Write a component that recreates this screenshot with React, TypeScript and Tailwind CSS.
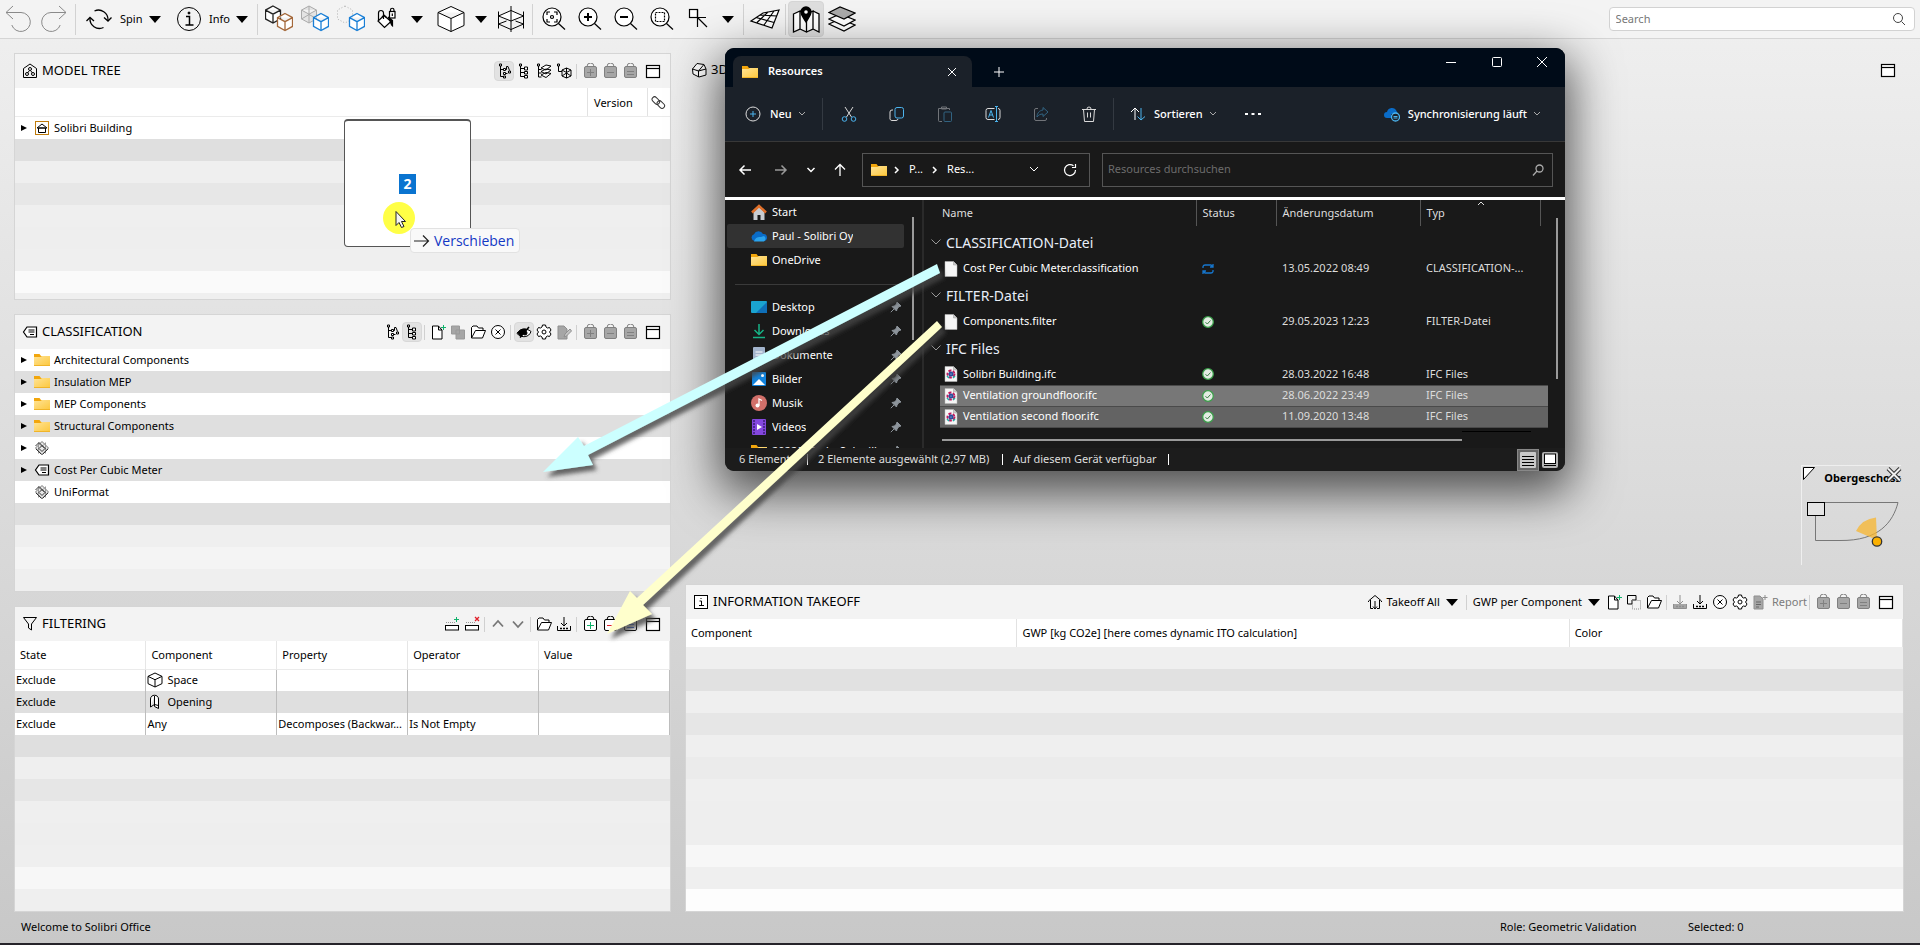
import React from 'react';

/* ---------- shared bits ---------- */

const Svg = ({ w = 16, h = 16, sw = 1, className = '', children }: any) => (
  <svg
    width={w}
    height={h}
    viewBox={`0 0 ${w} ${h}`}
    fill="none"
    stroke="currentColor"
    strokeWidth={sw}
    className={`shrink-0 ${className}`}
    aria-hidden="true"
  >
    {children}
  </svg>
);

const Caret = () => (
  <svg width="12" height="7" viewBox="0 0 12 7" className="shrink-0" aria-hidden="true">
    <path d="M0 0h12L6 7z" fill="#000" />
  </svg>
);

const Folder = ({ className = '' }: any) => (
  <svg width="16" height="14" viewBox="0 0 16 14" className={`shrink-0 ${className}`} aria-hidden="true">
    <defs>
      <linearGradient id="folderFill" x1="0" y1="0" x2="1" y2="1">
        <stop offset="0" stopColor="#ffe395" />
        <stop offset="1" stopColor="#fcc83f" />
      </linearGradient>
    </defs>
    <path d="M0 1h5.5l1.5 2H16v6H0z" fill="#f2a60c" />
    <path d="M0 4h6.5L8 3h8v9.5H0z" fill="url(#folderFill)" />
    <path d="M0 12h16v1H0z" fill="#f0b429" />
  </svg>
);

/* ---------- main toolbar icons, 28px grid ---------- */

const cubePath = (x: number, y: number, w: number, h: number) =>
  `M${x + w / 2} ${y}L${x + w} ${y + h * 0.24}V${y + h * 0.76}L${x + w / 2} ${y + h}L${x} ${y + h * 0.76}V${y + h * 0.24}ZM${x} ${y + h * 0.24}L${x + w / 2} ${y + h * 0.48}L${x + w} ${y + h * 0.24}M${x + w / 2} ${y + h * 0.48}V${y + h}`;

const UndoIcon = () => (
  <Svg w={28} h={28} className="text-[#8a8a8a]">
    <path d="M9 1 2 7.5 9 14M2 7.5H17a9.500 9.500 0 1 1-9.200 12.500" />
  </Svg>
);
const RedoIcon = () => (
  <Svg w={28} h={28} className="text-[#8a8a8a]">
    <path d="M19 1l7 6.500L19 14M26 7.500H11a9.500 9.500 0 1 0 9.200 12.500" />
  </Svg>
);
const SpinIcon = () => (
  <Svg w={28} h={28} sw={1.3}>
    <path d="M9.500 6a9.500 9.500 0 0 1 13.500 9M18.500 22.500A9.500 9.500 0 0 1 5 13" />
    <path d="M19 12.500l4 3.500 3.500-3.500M1.500 16 5 12.500 9 16" />
  </Svg>
);
const InfoIcon = () => (
  <Svg w={28} h={28}>
    <circle cx="14" cy="14" r="11.5" />
    <path d="M11 11.500h3.500V20M10.500 20h8" strokeWidth="1.5" />
    <circle cx="14" cy="8" r="1" fill="currentColor" />
  </Svg>
);
const CubesOrange = () => (
  <Svg w={28} h={28}>
    <path d={cubePath(0.5, 1, 15, 17)} fill="#fff" stroke="#222" strokeWidth="1.3" />
    <path d={cubePath(12.5, 8.5, 15, 17)} fill="#fff" stroke="#a4683a" strokeWidth="1.3" />
  </Svg>
);
const CubesGray = () => (
  <Svg w={28} h={28}>
    <path d={cubePath(0.5, 1, 15, 17)} fill="#e4e4e4" stroke="#aaa" />
    <path d="M8 1v9M.5 14 8 9.500l7.500 4" stroke="#aaa" />
    <path d={cubePath(12.5, 8.5, 15, 17)} fill="#fff" stroke="#1a7fd6" strokeWidth="1.3" />
  </Svg>
);
const CubesDotted = () => (
  <Svg w={28} h={28}>
    <path d="M8 1l7.500 4v9L8 18 .5 14V5z" stroke="#b0b0b0" strokeDasharray="1 2" />
    <path d={cubePath(12.5, 8.5, 15, 17)} fill="#fff" stroke="#1a7fd6" strokeWidth="1.3" />
  </Svg>
);
const PaintIcon = () => (
  <Svg w={28} h={28} sw={1.2}>
    <path d="M11 10.500 18 16.500l-6.500 6L5 16z" fill="#fff" />
    <path d="M5.500 15V8a2.500 2.500 0 0 1 5 0v6M9 12l2-2 2.500 2.500" />
    <path d="M15 12l4.500 3.500V21c-2-1-1.500-5-4.500-9z" fill="currentColor" />
    <rect x="16.500" y="6.500" width="5.500" height="6.500" fill="#fff" />
    <path d="M17.500 6.500V5a1.700 1.700 0 0 1 3.500 0v1.500M19.300 8.500v2.500" />
  </Svg>
);
const CubeIcon = () => (
  <Svg w={28} h={28}>
    <path d={cubePath(1, 1.5, 26, 25)} fill="#fff" />
  </Svg>
);
const SectionIcon = () => (
  <Svg w={28} h={28}>
    <path d="M1.500 11 14 5.500 26.500 11 14 16z" fill="#fff" />
    <path d="M1.500 19 14 24.500 26.500 19M1.500 19l8-3M26.500 19l-8-3M1.500 6.500v17M26.500 6.500v17M14 1v26" />
  </Svg>
);
const ZoomBase = ({ children }: any) => (
  <Svg w={28} h={28} sw={1.2}>
    <circle cx="12" cy="12" r="9" fill="#fff" />
    <path d="M18.500 18.500 25 24.500" />
    {children}
  </Svg>
);
const RulerIcon = () => (
  <Svg w={28} h={28} sw={1.2}>
    <rect x="5.500" y="4.500" width="8" height="8" fill="#fff" />
    <path d="M13.500 4.500v17.500M13.500 12.500H22M13.500 12.500 23 22" />
  </Svg>
);
const GridIcon = () => (
  <Svg w={32} h={24} sw={1.2}>
    <path d="M2 14 14 6l16-3-7 18zM8 15.500 19 5M15 18 25 4M7 10.500l18 5M11 8l17 1" fill="#fff" />
  </Svg>
);
const MapIcon = () => (
  <Svg w={28} h={28} sw={1.3}>
    <path d="M1.500 9 8 6v18l-6.500 3zM8 6l6.500 3v18L8 24M14.500 9 21 6v18l-6.500 3M21 6l6 3v18l-6-3" fill="#fff" />
    <path d="M14 17c-3-5-5-7-5-10a5 5 0 0 1 10 0c0 3-2 5-5 10z" fill="#000" />
    <circle cx="14" cy="7" r="1.8" fill="#fff" stroke="none" />
  </Svg>
);
const LayersIcon = () => (
  <Svg w={28} h={28} sw={1.2}>
    <path d="M1 19l11-5 15 6-11 6z" fill="#fff" />
    <path d="M1 14l11-5 15 6-11 6z" fill="#fff" />
    <path d="M1 7.500 12 2l15 6-11 6z" fill="#aaa" />
  </Svg>
);

const Cell = ({ label, active = false, children }: any) => (
  <button
    aria-label={label}
    className={
      active
        ? 'flex h-9 w-9 shrink-0 items-center justify-center rounded border border-[#d6d6d6] bg-[#dedede]'
        : 'flex h-9 w-9 shrink-0 items-center justify-center'
    }
  >
    {children}
  </button>
);

const DropBtn = ({ label }: any) => (
  <button aria-label={label} className="flex h-9 w-6 shrink-0 items-center justify-center">
    <Caret />
  </button>
);

const BarSep = () => <div className="mx-[3px] h-[31px] w-px shrink-0 bg-[#d2d2d2]" />;

const Toolbar = () => (
  <header className="flex h-[39px] items-center border-b border-[#d5d5d5] bg-[#f3f3f3] pr-[5px]">
    <Cell label="Undo"><UndoIcon /></Cell>
    <Cell label="Redo"><RedoIcon /></Cell>
    <BarSep />
    <button className="flex h-9 w-[88px] shrink-0 items-center pl-[6px]">
      <SpinIcon />
      <span className="w-9 pl-[7px] text-left">Spin</span>
      <Caret />
    </button>
    <button className="flex h-9 w-[87px] shrink-0 items-center pl-2">
      <InfoIcon />
      <span className="w-[33px] pl-[6px] text-left">Info</span>
      <Caret />
    </button>
    <BarSep />
    <Cell label="Show all"><CubesOrange /></Cell>
    <Cell label="Transparent others"><CubesGray /></Cell>
    <Cell label="Hide others"><CubesDotted /></Cell>
    <Cell label="Paint"><PaintIcon /></Cell>
    <DropBtn label="Paint options" />
    <div className="w-1" />
    <Cell label="View cube"><CubeIcon /></Cell>
    <DropBtn label="View options" />
    <Cell label="Section"><SectionIcon /></Cell>
    <BarSep />
    <Cell label="Zoom to fit">
      <ZoomBase><path d="M7 10V7h3M14 7h3v3M17 14v3h-3M10 17H7v-3" /><circle cx="12" cy="12" r="1.5" /></ZoomBase>
    </Cell>
    <Cell label="Zoom in"><ZoomBase><path d="M12 8v8M8 12h8" strokeWidth="2" /></ZoomBase></Cell>
    <Cell label="Zoom out"><ZoomBase><path d="M8 12h8" strokeWidth="2" /></ZoomBase></Cell>
    <Cell label="Zoom area">
      <ZoomBase><rect x="7.500" y="7.500" width="9" height="9" strokeDasharray="2 1" /></ZoomBase>
    </Cell>
    <Cell label="Measure"><RulerIcon /></Cell>
    <DropBtn label="Measure options" />
    <BarSep />
    <Cell label="Grid"><GridIcon /></Cell>
    <div className="mx-[2px] h-[31px] w-px shrink-0 bg-[#d2d2d2]" />
    <Cell label="Map" active><MapIcon /></Cell>
    <Cell label="Layers"><LayersIcon /></Cell>
    <label className="ml-auto flex h-6 w-[16%] items-center rounded border border-[#d2d2d2] bg-white pl-[6px] pr-2">
      <input
        aria-label="Search"
        placeholder="Search"
        className="min-w-0 flex-1 bg-transparent text-[11px] outline-none placeholder:text-[#777]"
      />
      <Svg w={14} h={14} className="text-[#444]">
        <circle cx="6" cy="6" r="4.500" />
        <path d="M9.500 9.500 13 13" />
      </Svg>
    </label>
  </header>
);

/* ---------- panel toolbar icons, 16px grid ---------- */

const Bag = ({ kind, color = '' }: any) => (
  <Svg className={color ? 'text-black' : 'text-[#808080]'}>
    <path d="M5 3.500a3 3 0 0 1 7 0" />
    <rect x="2.500" y="3.500" width="12" height="11" rx="1.500" fill={color ? '#fff' : '#a6a6a6'} />
    {kind === 'plus' && <path d="M8.500 6v7M5 9.500h7" stroke={color || 'currentColor'} />}
    {kind === 'minus' && <path d="M5 9.500h7" stroke={color || 'currentColor'} />}
    {kind === 'equal' && <path d="M5 8.500h7M5 11.500h7" stroke={color || 'currentColor'} />}
  </Svg>
);
const TreeA = () => (
  <Svg>
    <path d="M4.500 3v10.500H7M4.500 6.500H7M9.500 6.500h1v-3H12l1.500 4M9.500 10.500h2" />
    <path d="M3.500 1h2v2h-2zM7.500 5.500h2v2h-2zM7.500 9.500h2v2h-2zM7.500 13h2v2h-2zM12.500 8h2v2h-2z" fill="#fff" />
  </Svg>
);
const TreeB = () => (
  <Svg>
    <path d="M4.500 3v10.500H8M4.500 5.500H8M4.500 9.500H8" />
    <path d="M3.500 1h2v2h-2zM8.500 4h3v3h-3zM8.500 8.500h3v2.500h-3zM8.500 12.500h3V15h-3z" fill="#fff" />
  </Svg>
);
const TreeC = () => (
  <Svg>
    <path d="M2.500 3v11h3M2.500 6.500h3M2.500 10h3" />
    <path d="M1.500 1h2v2h-2z" fill="#fff" />
    <path d="M5 12l5-2.500 5 1-5 4zM5 8.500l5-2.500 5 1-5 4zM5 5l5-3 5 1-5 4z" fill="#fff" />
  </Svg>
);
const TreeD = () => (
  <Svg>
    <path d="M2.500 3v5.500H6" />
    <path d="M1.500 1h2v2h-2z" fill="#fff" />
    <path d="M6 7l4.500-2L15 7v6l-4.500 2L6 13zM6 7l4.500 2.500L15 7M10.500 5v10M6 13l4.500-3 4.500 3" />
  </Svg>
);
const WindowIcon = () => (
  <Svg>
    <rect x="1.500" y="2.500" width="13" height="12" fill="#fff" strokeWidth="1.2" />
    <path d="M1.500 5.500h13" strokeWidth="1.2" />
  </Svg>
);
const NewDoc = () => (
  <Svg>
    <path d="M2.500 2h6l3.500 4v9H2.500zM8.500 2v4H12" fill="#fff" />
    <path d="M13.500 1v5M11 3.500h5" stroke="#10b26b" />
  </Svg>
);
const CopyGray = () => (
  <Svg className="text-[#999]">
    <path d="M1.500 2h8v8h-8zM6 6h8.500v9H6z" fill="#a6a6a6" />
  </Svg>
);
const CopyDots = () => (
  <Svg>
    <path d="M6 10H1.500V1.500H10V6H6z" />
    <rect x="6.500" y="6.500" width="8" height="8.500" strokeDasharray="1 1" stroke="#888" />
  </Svg>
);
const OpenIcon = () => (
  <Svg>
    <path d="M1.500 14V3.500L3 2h4l1.500 2H13v2.500M1.500 14l4-7.500h10L12.500 14z" fill="#fff" />
  </Svg>
);
const CancelIcon = () => (
  <Svg>
    <circle cx="8" cy="8" r="6.500" fill="#fff" />
    <path d="M5.500 5.500l5 5M10.500 5.500l-5 5" />
  </Svg>
);
const EyeIcon = () => (
  <Svg>
    <path d="M1 9.500c3-5 9-6 14-2-2 6-9 7-14 2z" fill="#fff" />
    <path d="M1.500 9C4 5 8 4.500 10.500 5.500L5 12z" fill="#000" />
    <circle cx="9" cy="9" r="2" fill="#000" />
    <path d="M13 3 4 13.500" strokeWidth="1.5" />
  </Svg>
);
const GearIcon = () => (
  <Svg>
    <path d="M6.500 1h3l.5 2 1.500 1 2-.5 1.500 2.500-1.500 2 1.500 2-1.500 2.500-2-.5-1.500 1-.5 2h-3L6 13l-1.500-1-2 .5L1 10l1.500-2L1 6l1.500-2.500 2 .5L6 3z" fill="#fff" />
    <circle cx="8" cy="8" r="2" />
  </Svg>
);
const EditGray = () => (
  <Svg className="text-[#8f8f8f]">
    <path d="M2 2h6l3 3v10H2z" fill="#a6a6a6" />
    <path d="M8 13l1-3 5-5 1.500 2-5 5z" fill="#c4c4c4" />
  </Svg>
);
const FilePlusGray = () => (
  <Svg className="text-[#8f8f8f]">
    <path d="M2 2h6l3 3v10H2z" fill="#a6a6a6" />
    <path d="M4 8h5M4 10.500h5M4 13h3" stroke="#666" />
    <path d="M13 1v5M10.500 3.500h5" />
  </Svg>
);
const RowIcon = ({ del = false }: any) => (
  <Svg>
    <path d="M2 6.500h9" stroke="#999" strokeDasharray="1 1" />
    <rect x="1.500" y="9.500" width="13" height="4.500" fill="#fff" />
    {del ? <path d="M11 1l4 4M15 1l-4 4" stroke="#e0202a" strokeWidth="1.3" /> : <path d="M12.500 1v5M10 3.500h5" stroke="#10b26b" />}
  </Svg>
);
const SaveIcon = ({ gray = false }: any) => (
  <Svg className={gray ? 'text-[#8f8f8f]' : 'text-black'}>
    <path d="M8 1v9M5 7l3 3 3-3" />
    <path d="M1.500 10v4.500h13V10" fill={gray ? '#a6a6a6' : 'none'} />
    <path d="M4 12.500h8" strokeDasharray="2 1" strokeWidth="1.5" />
  </Svg>
);

const Tool = ({ label, active = false, children }: any) => (
  <button
    aria-label={label}
    className={
      active
        ? 'flex size-5 shrink-0 items-center justify-center rounded border border-[#d8d8d8] bg-[#e2e2e2]'
        : 'flex size-5 shrink-0 items-center justify-center'
    }
  >
    {children}
  </button>
);
const Sep = () => <div className="mr-[3px] ml-[2px] h-[15px] w-px shrink-0 bg-[#d0d0d0]" />;

const Bags = ({ on = false }: any) => (
  <>
    <Tool label="Add to basket"><Bag kind="plus" color={on ? '#10b26b' : ''} /></Tool>
    <Tool label="Remove from basket"><Bag kind="minus" color={on ? '#e0202a' : ''} /></Tool>
    <Tool label="Set basket"><Bag kind="equal" color={on ? '#2f5fd0' : ''} /></Tool>
    <div className="w-[3px]" />
    <Tool label="Maximize"><WindowIcon /></Tool>
  </>
);

const Panel = ({ icon, title, tools, children }: any) => (
  <section className="border border-[#d5d5d5] bg-[#efefef]">
    <div className="flex h-[34px] items-center bg-[#f3f3f3] pr-[7px] pl-[7px]">
      {icon}
      <h2 className="pl-1 text-[13px] whitespace-nowrap">{title}</h2>
      <div className="ml-auto flex items-center">{tools}</div>
    </div>
    {children}
  </section>
);

const Stripes = ({ rows }: { rows: string[] }) => (
  <div>
    {rows.map((c, i) => <div key={i} className={`h-[22px] ${c}`} />)}
  </div>
);

const Expander = () => (
  <svg width="6" height="8" viewBox="0 0 6 8" className="shrink-0" aria-hidden="true"><path d="M0 1l6 3-6 3z" fill="#000" /></svg>
);

const TagIcon = () => (
  <Svg>
    <path d="M5 3h9.500v10H5L1.500 8z" fill="#fff" strokeWidth="1.2" />
    <path d="M6.500 6h6M6.500 8h6M8 10.500h4" />
  </Svg>
);
const WebIcon = () => (
  <Svg className="text-[#333]">
    <path d="M1.500 8 8 1.500 14.500 8 8 14.500z" fill="#e8e8e8" stroke="#777" />
    <path d="M4.500 2.500v11M11.500 2.500v11M4.500 3 8 6.500 11.500 3" stroke="#999" />
    <path d="M1.500 6 5 2.500 11 8.500M5 8.500l3 3 3-3-3-3zM2 9l5.500 5.500M14 9l-5.500 5.500" />
  </Svg>
);
const BuildingIcon = () => (
  <Svg>
    <rect x="1.500" y="1.500" width="13" height="13" stroke="#c07c0c" fill="#fff" />
    <path d="M4.500 8h7v4.500h-7zM3 8l5-4 5 4z" />
  </Svg>
);

const TreeRow = ({ icon, text, expand = true, alt = false }: any) => (
  <li className={alt ? 'flex h-[22px] items-center bg-[#dfdfdf] pl-[6px]' : 'flex h-[22px] items-center bg-white pl-[6px]'}>
    <span className="w-[13px]">{expand && <Expander />}</span>
    <span className="flex w-5 justify-start">{icon}</span>
    {text}
  </li>
);

const ModelTree = () => (
  <Panel
    icon={
      <Svg>
        <path d="M1.500 14.500V5.500L8 1l6.500 4.500v9z" />
        <circle cx="8" cy="6" r="1.5" /><circle cx="5" cy="11" r="1.5" /><circle cx="11" cy="11" r="1.5" />
        <path d="M7.500 7.500 5.500 10M8.500 7.500l2 2.500" />
      </Svg>
    }
    title="MODEL TREE"
    tools={
      <>
        <Tool label="Spatial tree" active><TreeA /></Tool>
        <Tool label="Component tree"><TreeB /></Tool>
        <Tool label="Layer tree"><TreeC /></Tool>
        <Tool label="System tree"><TreeD /></Tool>
        <Sep />
        <Bags />
      </>
    }
  >
    <div className="flex h-[29px] border-b border-[#ebebeb] bg-white">
      <div className="flex-1 border-r border-[#e2e2e2]" />
      <div className="flex w-[60px] items-center border-r border-[#e2e2e2] pt-[2px] pl-[6px]">Version</div>
      <div className="flex w-[22px] items-center justify-center">
        <Svg className="text-[#333]">
          <rect x="1" y="4" width="8.500" height="5" rx="2.500" transform="rotate(45 5 6)" />
          <rect x="6" y="8" width="8.500" height="5" rx="2.500" transform="rotate(45 10 10)" />
        </Svg>
      </div>
    </div>
    <ul><TreeRow icon={<BuildingIcon />} text="Solibri Building" /></ul>
    <Stripes rows={['bg-[#dfdfdf]', 'bg-[#efefef]', 'bg-[#e7e7e7]', 'bg-[#efefef]', 'bg-[#eeeeee]', 'bg-[#efefef]', 'bg-[#fafafa]']} />
    <div className="h-[6px]" />
  </Panel>
);

const classes = [
  { text: 'Architectural Components', icon: <Folder /> },
  { text: 'Insulation MEP', icon: <Folder /> },
  { text: 'MEP Components', icon: <Folder /> },
  { text: 'Structural Components', icon: <Folder /> },
  { text: '', icon: <WebIcon /> },
  { text: 'Cost Per Cubic Meter', icon: <TagIcon /> },
  { text: 'UniFormat', icon: <WebIcon />, leaf: true },
];

const Classification = () => (
  <Panel
    icon={<TagIcon />}
    title="CLASSIFICATION"
    tools={
      <>
        <Tool label="Spatial tree"><TreeA /></Tool>
        <Tool label="Component tree" active><TreeB /></Tool>
        <Sep />
        <Tool label="New"><NewDoc /></Tool>
        <Tool label="Copy"><CopyGray /></Tool>
        <Tool label="Open"><OpenIcon /></Tool>
        <Tool label="Close"><CancelIcon /></Tool>
        <Sep />
        <Tool label="Visibility" active><EyeIcon /></Tool>
        <Tool label="Settings"><GearIcon /></Tool>
        <Tool label="Edit"><EditGray /></Tool>
        <Sep />
        <Bags />
      </>
    }
  >
    <ul>
      {classes.map((c, i) => <TreeRow key={i} icon={c.icon} text={c.text} expand={!c.leaf} alt={i % 2 === 1} />)}
    </ul>
    <Stripes rows={['bg-[#dfdfdf]', 'bg-[#efefef]', 'bg-[#f4f4f4]', 'bg-[#efefef]']} />
  </Panel>
);

const SpaceIcon = () => <Svg><path d={cubePath(1, 1, 14, 14)} fill="#fff" /></Svg>;
const OpeningIcon = () => (
  <Svg><path d="M3.500 13V5c0-5 8-5 8 0v9.500l-4-2V2M3.500 13l4-2.500 4 1" fill="#fff" /></Svg>
);

const filters = [
  ['Exclude', <><SpaceIcon /><span className="pl-1">Space</span></>, '', '', ''],
  ['Exclude', <><OpeningIcon /><span className="pl-1">Opening</span></>, '', '', ''],
  ['Exclude', 'Any', 'Decomposes (Backwar...', 'Is Not Empty', ''],
];

const Filtering = () => (
  <Panel
    icon={<Svg><path d="M1.500 1.500h13L9.500 8v6l-3-2V8z" /></Svg>}
    title="FILTERING"
    tools={
      <>
        <Tool label="Add row"><RowIcon /></Tool>
        <Tool label="Delete row"><RowIcon del /></Tool>
        <Sep />
        <Tool label="Move up"><Svg sw={1.8} className="text-[#777]"><path d="M3 10.500 8 5l5 5.500" /></Svg></Tool>
        <Tool label="Move down"><Svg sw={1.8} className="text-[#777]"><path d="M3 5.500 8 11l5-5.500" /></Svg></Tool>
        <Sep />
        <Tool label="Open"><OpenIcon /></Tool>
        <Tool label="Save"><SaveIcon /></Tool>
        <Sep />
        <Bags on />
      </>
    }
  >
    <table className="w-full table-fixed border-collapse">
      <thead>
        <tr className="h-7 border-b border-[#ebebeb] bg-white">
          {['State', 'Component', 'Property', 'Operator', 'Value'].map((h) => (
            <th key={h} className="border-r border-[#e6e6e6] p-0 pl-[5px] text-left font-normal">{h}</th>
          ))}
        </tr>
      </thead>
      <tbody>
        {filters.map((row, i) => (
          <tr key={i} className={i % 2 ? 'bg-[#dfdfdf]' : 'bg-white'}>
            {row.map((c, j) => (
              <td key={j} className="h-[22px] border-r border-[#bdbdbd] p-0 pl-px">
                {j === 1 ? <div className="flex items-center">{c}</div> : <div className="whitespace-nowrap">{c}</div>}
              </td>
            ))}
          </tr>
        ))}
      </tbody>
    </table>
    <Stripes rows={['bg-[#dfdfdf]', 'bg-[#efefef]', 'bg-[#e6e6e6]', 'bg-[#efefef]', 'bg-[#eeeeee]', 'bg-[#efefef]', 'bg-[#f7f7f7]', 'bg-[#efefef]']} />
  </Panel>
);

const Takeoff = () => (
  <Panel
    icon={<Svg><rect x="1.500" y="1.500" width="13" height="13" fill="#fff" /><path d="M6.500 7h2v4.500M6 11.500h5M7.500 4.500h1" /></Svg>}
    title="INFORMATION TAKEOFF"
    tools={
      <>
        <button className="flex items-center pr-[6px]">
          <Svg><path d="M1.500 8V7L8 1.500 14.500 7v1M3.500 6v8.500H6M12.500 6v8.500H10M8 7v8M6 12.500 8 15l2-2.500" /></Svg>
          <span className="pr-[6px] pl-1">Takeoff All</span>
          <Caret />
        </button>
        <Sep />
        <button className="flex items-center pr-1 pl-[3px]">
          <span className="pr-[6px]">GWP per Component</span>
          <Caret />
        </button>
        <Tool label="New"><NewDoc /></Tool>
        <Tool label="Copy"><CopyDots /></Tool>
        <Tool label="Open"><OpenIcon /></Tool>
        <Sep />
        <Tool label="Save"><SaveIcon gray /></Tool>
        <Tool label="Save as"><SaveIcon /></Tool>
        <Tool label="Close"><CancelIcon /></Tool>
        <Tool label="Settings"><GearIcon /></Tool>
        <button className="flex items-center pl-[2px] text-[#7b7b7b]">
          <FilePlusGray />
          <span className="pl-1">Report</span>
        </button>
        <Sep />
        <Bags />
      </>
    }
  >
    <table className="w-full table-fixed border-collapse">
      <thead>
        <tr className="h-7 bg-white">
          <th className="w-[27.2%] border-r border-[#e2e2e2] p-0 pl-[5px] text-left font-normal">Component</th>
          <th className="w-[45.4%] border-r border-[#e2e2e2] p-0 pl-[5px] text-left font-normal">GWP [kg CO2e] [here comes dynamic ITO calculation]</th>
          <th className="border-r border-[#e2e2e2] p-0 pl-[5px] text-left font-normal">Color</th>
        </tr>
      </thead>
    </table>
    <Stripes rows={['bg-[#efefef]', 'bg-[#e1e1e1]', 'bg-[#efefef]', 'bg-[#e6e6e6]', 'bg-[#efefef]', 'bg-[#ebebeb]', 'bg-[#efefef]', 'bg-[#eeeeee]', 'bg-[#eeeeee]', 'bg-[#f7f7f7]', 'bg-[#efefef]', 'bg-[#fdfdfd]']} />
  </Panel>
);

/* ---------- 3D viewport ---------- */

const MiniMap = () => (
  <div className="absolute right-[3px] bottom-[19px] h-[100px] w-[100px] border-t border-l border-[#efefef]">
    <div className="flex justify-end pt-1 text-[11px] font-bold">Obergeschoss</div>
    <svg width="100" height="100" viewBox="0 0 100 100" fill="none" className="absolute top-0 left-0" aria-hidden="true">
      <path d="M1.500 1.500h11l-11 12z" fill="#fff" stroke="#000" />
      <path d="M86 2.500l12 12M98 2.500l-12 12" stroke="#333" strokeWidth="4" />
      <path d="M86 2.500l12 12M98 2.500l-12 12" stroke="#f0f0f0" strokeWidth="2" />
      <path d="M22 36.500h74C91 56 77 75 38 74.500H13.500V50" stroke="#777" />
      <path d="M75 74 54 65Q60 53 74 51.500z" fill="#f8b62d" opacity=".75" />
      <rect x="5.500" y="36.500" width="17" height="13" fill="#e4e4e4" stroke="#000" />
      <circle cx="75" cy="75.500" r="4.700" fill="#fbb000" stroke="#333" strokeWidth="1.3" />
    </svg>
  </div>
);

const Viewport = () => (
  <section className="relative flex-1">
    <div className="flex h-[34px] items-center pr-2 pl-[6px]">
      <Svg>
        <path d="M1.500 7 6 1.500l7 1L15 7v6l-7 2-6-3zM1.500 7l6 2L15 7M7.500 9v6M7.500 9l5-6" fill="#fff" />
      </Svg>
      <h2 className="pl-1 text-[13px]">3D</h2>
      <button aria-label="Maximize" className="ml-auto"><WindowIcon /></button>
    </div>
    <MiniMap />
  </section>
);

/* ---------- explorer window ---------- */

const Chevron = ({ className = 'text-[#aaa]' }: any) => (
  <Svg w={8} h={6} className={className}><path d="M1 1l3 3 3-3" /></Svg>
);

const PageIcon = ({ ifc = false }: any) => (
  <Svg w={14} h={16}>
    <path d="M1 .5h8.500L13 4v11.500H1z" fill="#f6f6f6" stroke="#bbb" strokeWidth=".5" />
    <path d="M9.500.5V4H13" stroke="#999" fill="#ccc" strokeWidth=".5" />
    {ifc && (
      <>
        <circle cx="7" cy="8" r="3.500" stroke="#c2185b" strokeWidth="2" strokeDasharray="3 1.5" />
        <circle cx="7" cy="8" r="1.5" stroke="#2a4f9c" strokeWidth="2" />
        <path d="M3 10l2 2M9 12l2-2" stroke="#1fa9a3" strokeWidth="1.5" />
      </>
    )}
  </Svg>
);

const OkIcon = () => (
  <Svg w={12} h={12}>
    <circle cx="6" cy="6" r="5.300" fill="#e3ece3" stroke="#3ca04b" strokeWidth="1.3" />
    <path d="M3.500 6.200 5.300 8l3.200-3.500" stroke="#3a7d45" />
  </Svg>
);
const SyncIcon = () => (
  <Svg w={12} h={12} sw={1.3} className="text-[#1677cf]">
    <path d="M1 5V3.500Q1.500 2 3 2h6l2 2M11 1v3H8M11 7v1.500Q10.500 10 9 10H3L1 8M1 11V8h3" />
  </Svg>
);

const PinIcon = () => (
  <Svg w={12} h={12} className="text-[#8d949b]">
    <path d="M7 1l4 4-2 .5-2 2.500-.5 2L2 5.500 4.500 5l2-2z" fill="currentColor" />
    <path d="M4 8 .8 11.200" />
  </Svg>
);

const CloudIcon = () => (
  <svg width="16" height="12" viewBox="0 0 16 12" className="shrink-0" aria-hidden="true">
    <path d="M3.500 11A3.500 3.500 0 0 1 3 4.200 5 5 0 0 1 12 4a3.500 3.500 0 0 1 1 7z" fill="#0a6cc8" />
    <path d="M3 11.500c1-4 4-5 7-4.500l3-1a3.200 3.200 0 0 1 0 5.500z" fill="#2ba3ec" />
  </svg>
);

const places = [
  { text: 'Desktop', icon: <Svg><rect x="0" y="2" width="16" height="12" rx="1" fill="#1aa3cf" stroke="none" /><path d="M16 3v11H5z" fill="#0f6fb8" stroke="none" /></Svg> },
  { text: 'Downloads', icon: <Svg sw={1.5} className="text-[#17b386]"><path d="M8 1v10M3.500 7 8 11.500 12.500 7M2 14.500h12" /></Svg> },
  { text: 'Dokumente', icon: <Svg><rect x="2" y="0" width="12" height="16" rx="1" fill="#a3b4cc" stroke="none" /><path d="M4.500 5h7M4.500 8h7M4.500 11h4" stroke="#fff" /></Svg> },
  { text: 'Bilder', icon: <Svg><rect x="1" y="1" width="14" height="14" rx="1" fill="#1283dc" stroke="none" /><path d="M2 14l6-6 6 6z" fill="#fff" stroke="none" /><circle cx="11.500" cy="4.500" r="1.5" fill="#fff" stroke="none" /></Svg> },
  { text: 'Musik', icon: <Svg><circle cx="8" cy="8" r="8" fill="#d2706a" stroke="none" /><circle cx="6.500" cy="10.500" r="2" fill="#fff" stroke="none" /><path d="M8 10.500V4l3 1.500" stroke="#fff" strokeWidth="1.3" /></Svg> },
  { text: 'Videos', icon: <Svg><rect x="1" y="0" width="14" height="16" rx="1" fill="#8447de" stroke="none" /><path d="M3 1v14M13 1v14" stroke="#3d1c78" strokeWidth="1.5" strokeDasharray="2 1" /><path d="M6 5l5 3-5 3z" fill="#fff" stroke="none" /></Svg> },
  { text: '20220_Code_Solanillahi', icon: <Folder /> },
];

const NavRow = ({ icon, text, pin = false, active = false }: any) => (
  <li>
    <a
      href="#"
      className={
        active
          ? 'ml-[2px] flex h-6 w-[177px] items-center rounded-[2px] bg-[#323232] pl-6'
          : 'ml-[2px] flex h-6 w-[177px] items-center pl-6'
      }
    >
      <span className="flex w-[21px] shrink-0">{icon}</span>
      <span className="truncate">{text}</span>
      {pin && <span className="mr-[2px] ml-auto"><PinIcon /></span>}
    </a>
  </li>
);

const groups = [
  { name: 'CLASSIFICATION-Datei', files: [['Cost Per Cubic Meter.classification', 'sync', '13.05.2022 08:49', 'CLASSIFICATION-...']] },
  { name: 'FILTER-Datei', files: [['Components.filter', 'ok', '29.05.2023 12:23', 'FILTER-Datei']] },
  {
    name: 'IFC Files',
    files: [
      ['Solibri Building.ifc', 'ok', '28.03.2022 16:48', 'IFC Files'],
      ['Ventilation groundfloor.ifc', 'ok', '28.06.2022 23:49', 'IFC Files'],
      ['Ventilation second floor.ifc', 'ok', '11.09.2020 13:48', 'IFC Files'],
    ],
  },
];

const fileRow = ['text-white', 'border-t border-[#4a4a4a] bg-[#777777] text-white', 'border-y border-[#4a4a4a] bg-[#636363] text-white'];

const FileList = () => (
  <div className="relative min-w-0 flex-1 pl-4">
    <table className="w-[608px] table-fixed border-collapse">
      <thead>
        <tr className="h-[26px] text-left text-[#dedede]">
          <th className="w-64 border-r border-[#555] p-0 pl-[2px] font-normal">Name</th>
          <th className="w-20 border-r border-[#555] p-0 pl-[6px] font-normal">Status</th>
          <th className="w-36 border-r border-[#555] p-0 pl-[6px] font-normal">Änderungsdatum</th>
          <th className="relative w-[120px] border-r border-[#555] p-0 pl-[6px] font-normal">
            Typ
            <Svg w={8} h={6} className="absolute top-0 left-14"><path d="M1 5l3-3 3 3" /></Svg>
          </th>
          <th className="p-0" aria-label="Mehr" />
        </tr>
      </thead>
      {groups.map((g) => (
        <tbody key={g.name}>
          <tr className="h-8">
            <th colSpan={5} className="p-0 text-left text-[14px] font-normal text-[#e8eef8]">
              <div className="-ml-[10px] flex items-center gap-1">
                <Svg w={12} h={8} className="text-[#999]"><path d="M1.500 1.500 6 6l4.500-4.500" /></Svg>
                {g.name}
              </div>
            </th>
          </tr>
          {g.files.map((f, i) => (
            <tr key={f[0]} className={`h-[21px] ${fileRow[i]}`}>
              <td className="p-0 pl-1">
                <div className="flex items-center gap-[5px]">
                  <PageIcon ifc={g.name === 'IFC Files'} />
                  <span className="whitespace-nowrap">{f[0]}</span>
                </div>
              </td>
              <td className="p-0 pl-[6px]">{f[1] === 'ok' ? <OkIcon /> : <SyncIcon />}</td>
              <td className="p-0 pl-[6px] text-[#dcdcdc]">{f[2]}</td>
              <td className="p-0 pl-[6px] whitespace-nowrap text-[#dcdcdc]">{f[3]}</td>
              <td />
            </tr>
          ))}
        </tbody>
      ))}
    </table>
    {/* scrollbars */}
    <div className="absolute top-[18px] right-[7px] h-[161px] w-[2px] bg-[#9a9a9a]" />
    <div className="absolute bottom-[7px] left-[18px] h-[2px] w-[520px] bg-[#9a9a9a]" />
    <div className="absolute right-[34px] bottom-4 h-px w-[69px] bg-black" />
  </div>
);

const CmdBtn = ({ label, dim = false, children }: any) => (
  <button aria-label={label} className={dim ? 'flex w-12 justify-center text-[#dadada] opacity-45' : 'flex w-12 justify-center text-[#dadada]'}>
    {children}
  </button>
);

const blue = '#4cb4ee';

const Explorer = () => (
  <div className="absolute top-12 left-[725px] flex h-[423px] w-[840px] flex-col overflow-hidden rounded-[9px] bg-[#191919] text-[11px] text-white">
    {/* tab strip */}
    <div className="flex h-[39px] shrink-0 items-end bg-[#000b18] pl-2">
      <div className="flex h-[31px] w-[239px] items-center rounded-t-[8px] bg-[#1b2129] pr-3 pl-[9px]">
        <Folder />
        <span className="pl-[10px] font-semibold">Resources</span>
        <button aria-label="Tab schließen" className="ml-auto">
          <Svg><path d="M4 4l8 8M12 4l-8 8" /></Svg>
        </button>
      </div>
      <button aria-label="Neuer Tab" className="flex h-[31px] w-[54px] items-center justify-center">
        <Svg><path d="M8 3v10M3 8h10" /></Svg>
      </button>
      <div className="ml-auto flex h-[39px] items-start pt-[6px]">
        <button aria-label="Minimieren" className="w-[46px]"><Svg className="mx-auto"><path d="M3 8.500h10" /></Svg></button>
        <button aria-label="Maximieren" className="w-[45px]"><Svg className="mx-auto"><rect x="3.500" y="3.500" width="9" height="9" rx="1" /></Svg></button>
        <button aria-label="Schließen" className="w-[46px]"><Svg className="mx-auto"><path d="M3 3l10 10M13 3 3 13" /></Svg></button>
      </div>
    </div>

    {/* command bar */}
    <div className="flex h-[55px] shrink-0 items-center border-b border-[#383838] bg-[#1b2129] pl-5 font-medium">
      <button className="flex w-[77px] items-center">
        <Svg><circle cx="8" cy="8" r="7" stroke="#ddd" /><path d="M8 5v6M5 8h6" stroke={blue} /></Svg>
        <span className="pr-[6px] pl-[9px]">Neu</span>
        <Chevron />
      </button>
      <div className="mr-[2px] h-8 w-px bg-[#343a42]" />
      <CmdBtn label="Ausschneiden">
        <Svg><path d="M4 1l6.500 10M12 1 5.500 11" /><circle cx="3.500" cy="13" r="2.300" stroke={blue} /><circle cx="12.500" cy="13" r="2.300" stroke={blue} /></Svg>
      </CmdBtn>
      <CmdBtn label="Kopieren">
        <Svg><path d="M4 4H3a2 2 0 0 0-2 2v6a2 2 0 0 0 2 2.500h4a2 2 0 0 0 2-1.500" /><rect x="6" y="1.500" width="8.500" height="10.500" rx="2" stroke={blue} /></Svg>
      </CmdBtn>
      <CmdBtn label="Einfügen" dim>
        <Svg><path d="M5 15.500H2.500a1 1 0 0 1-1-1v-12h11V4M4.500 1h5v2h-5z" /><rect x="7" y="6" width="7.500" height="9.500" rx="1" stroke={blue} /></Svg>
      </CmdBtn>
      <CmdBtn label="Umbenennen">
        <Svg><path d="M9.500 2.500H3a2 2 0 0 0-2 2v7a2 2 0 0 0 2 2h6.500M13 2.500a2 2 0 0 1 2 2v7a2 2 0 0 1-2 2" /><path d="M11.500.5v15M10 .5h3M10 15.500h3M3.500 11.500l2.500-7 2.500 7M4.500 9h3" stroke={blue} /></Svg>
      </CmdBtn>
      <CmdBtn label="Freigeben" dim>
        <Svg><path d="M5 2.500H3a1.500 1.500 0 0 0-1.500 1.500v9A1.500 1.500 0 0 0 3 14.500h9a1.500 1.500 0 0 0 1.500-1.500v-1" /><path d="M10 1.500 15 6l-5 4.500V8C7 8 5.500 9 4 11c0-4 2.500-6.500 6-7z" stroke={blue} /></Svg>
      </CmdBtn>
      <CmdBtn label="Löschen">
        <Svg><path d="M1 3.500h14M2.500 3.500l1 12h9l1-12M6 3a2 2 0 0 1 4 0M6.500 6.500v5M9.500 6.500v5" /></Svg>
      </CmdBtn>
      <div className="h-8 w-px bg-[#343a42]" />
      <button className="flex items-center pl-4">
        <Svg><path d="M5 14V2M1 6l4-4 4 4" /><path d="M11 2v12M7.500 10.500 11 14l4-3.500" stroke={blue} /></Svg>
        <span className="pr-[6px] pl-2">Sortieren</span>
        <Chevron />
      </button>
      <button aria-label="Mehr" className="ml-7">
        <Svg><path d="M0 7h3v2H0zM6.500 7h3v2h-3zM13 7h3v2h-3z" fill="#fff" stroke="none" /></Svg>
      </button>
      <button className="mr-6 ml-auto flex items-center">
        <Svg>
          <path d="M3 12A3 3 0 0 1 3 6a5 5 0 0 1 9.500-1L14 8H7v4z" fill="#0a6cc8" stroke="none" />
          <circle cx="11.500" cy="11" r="4" stroke={blue} fill="#1b2129" strokeWidth="1.3" />
          <path d="M9.500 10.500h4M9.500 12h4" stroke={blue} />
        </Svg>
        <span className="pr-[6px] pl-2">Synchronisierung läuft</span>
        <Chevron />
      </button>
    </div>

    {/* address row */}
    <div className="flex h-[55px] shrink-0 items-center pr-3 pl-3">
      <button aria-label="Zurück" className="w-[18px]"><Svg sw={1.5}><path d="M14 8H3M7.500 3.500 3 8l4.500 4.500" /></Svg></button>
      <button aria-label="Vorwärts" className="ml-[18px] w-[18px] text-[#999]"><Svg sw={1.5}><path d="M2 8h11M8.500 3.500 13 8l-4.500 4.500" /></Svg></button>
      <button aria-label="Verlauf" className="ml-3 w-[18px]"><Svg sw={1.5}><path d="M4.500 6 8 9.500 11.500 6" /></Svg></button>
      <button aria-label="Nach oben" className="ml-[11px] w-[18px]"><Svg sw={1.3}><path d="M8 14V2.500M3 7.500l5-5 5 5" /></Svg></button>
      <div className="ml-3 flex h-[34px] w-[228px] items-center border border-[#555] pr-3 pl-2">
        <Folder />
        <Svg w={8} h={10} sw={1.5} className="mr-2 ml-[6px]"><path d="M2 2l3 3-3 3" /></Svg>
        <a href="#">P...</a>
        <Svg w={8} h={10} sw={1.5} className="mx-2"><path d="M2 2l3 3-3 3" /></Svg>
        <a href="#">Res...</a>
        <button aria-label="Pfade" className="mr-6 ml-auto"><Svg w={10} h={7}><path d="M1 1l4 4 4-4" /></Svg></button>
        <button aria-label="Aktualisieren"><Svg w={14} h={14} sw={1.2}><path d="M12.500 7A5.500 5.500 0 1 1 10.500 2.800M12.500 1v3.500H9" /></Svg></button>
      </div>
      <label className="ml-3 flex h-[34px] flex-1 items-center border border-[#555] pr-2 pl-[5px]">
        <input aria-label="Resources durchsuchen" placeholder="Resources durchsuchen" className="min-w-0 flex-1 bg-transparent outline-none placeholder:text-[#6c6c6c]" />
        <Svg w={12} h={12} sw={1.3} className="text-[#aaa]"><circle cx="7.500" cy="4.500" r="3.500" /><path d="M5 7 1 11.500" /></Svg>
      </label>
    </div>

    <div className="h-[3px] shrink-0 bg-white" />

    <div className="flex h-[248px] shrink-0 overflow-hidden">
      <nav className="relative w-[199px] shrink-0 overflow-hidden border-r-2 border-[#2a2a2a]">
        <ul>
          <NavRow text="Start" icon={<Svg><path d="M2.500 8v8h4v-5h3v5h4V8L8 3z" fill="#c9ccd1" stroke="none" /><path d="M1 8.500 8 2l7 6.500" stroke="#e0702a" strokeWidth="2.500" /></Svg>} />
          <NavRow text="Paul - Solibri Oy" active icon={<CloudIcon />} />
          <NavRow text="OneDrive" icon={<Folder />} />
        </ul>
        <div className="mt-[12px] mr-5 mb-[10px] ml-[10px] h-px bg-[#3a3a3a]" />
        <ul>
          {places.map((p) => <NavRow key={p.text} text={p.text} icon={p.icon} pin />)}
        </ul>
        <div className="absolute top-[17px] right-[8px] h-[123px] w-[2px] bg-[#9a9a9a]" />
      </nav>
      <FileList />
    </div>

    <footer className="flex h-[23px] items-center bg-[#1c1c1c] pr-[7px] pl-[14px] text-[#dedede]">
      <span className="w-[68px]">6 Elemente</span>
      <i className="mr-[10px] h-[11px] w-px bg-white" />
      <span className="w-[184px] whitespace-nowrap">2 Elemente ausgewählt (2,97 MB)</span>
      <i className="mr-[10px] h-[11px] w-px bg-white" />
      <span className="w-[155px] whitespace-nowrap">Auf diesem Gerät verfügbar</span>
      <i className="h-[11px] w-px bg-white" />
      <button aria-label="Details" className="ml-auto flex h-[22px] w-[22px] items-center justify-center border border-[#888] bg-[#666]">
        <Svg><rect width="16" height="16" rx="1" fill="#c8c8c8" stroke="none" /><path d="M2 4.500h12M2 7.500h12M2 10.500h12M2 13.500h12" stroke="#000" /></Svg>
      </button>
      <button aria-label="Große Symbole" className="ml-[3px]">
        <Svg><rect width="16" height="16" rx="2" fill="#b4b4b4" stroke="none" /><rect x="2.500" y="2" width="11" height="9.500" fill="#fff" stroke="#000" /><path d="M2 13.500h12" stroke="#000" /></Svg>
      </button>
    </footer>
  </div>
);

/* ---------- drag feedback and arrows ---------- */

const DragGhost = () => (
  <>
    <div className="absolute top-[119px] left-[344px] flex h-32 w-[127px] items-center justify-center rounded border border-t-2 border-[#555] bg-white">
      <span className="flex h-5 w-[17px] items-center justify-center bg-[#0a74d0] text-[14px] font-bold text-white">2</span>
    </div>
    <div className="absolute top-[202px] left-[383px] size-8 rounded-full bg-[#ffff46]">
      <svg width="32" height="32" viewBox="0 0 32 32" aria-hidden="true">
        <path d="M13 9.500v14l3-3 2.500 5 2.500-1-2.500-5h4z" fill="#f4f4f4" stroke="#222" />
      </svg>
    </div>
    <div className="absolute top-[228px] left-[410px] flex h-[25px] items-center gap-1 rounded border border-[#e2e2e2] bg-[#f9f9f9] pr-[5px] pl-[3px] font-['Open_Sans',sans-serif] text-[14px] text-[#1338c4]">
      <Svg className="text-[#222]" sw={1.2}><path d="M0 8h14M9 2.500 14.500 8 9 13.500" /></Svg>
      Verschieben
    </div>
  </>
);

const Arrows = () => (
  <svg width="1920" height="945" viewBox="0 0 1920 945" className="pointer-events-none absolute top-0 left-0 max-w-full" aria-hidden="true">
    <defs>
      <filter id="arrowShadow" x="-10%" y="-10%" width="120%" height="120%">
        <feDropShadow dx="4" dy="5" stdDeviation="2" floodColor="#444" floodOpacity=".8" />
      </filter>
    </defs>
    <g filter="url(#arrowShadow)">
      <path d="M937 264 584 446 578 437 543 472 593 465 588 455 940 273z" fill="#ccffff" />
      <path d="M937 321 637 598 630 591 607 634 652 614 643 605 942 327z" fill="#ffffcc" />
    </g>
  </svg>
);

export default function App() {
  return (
    <div className="relative flex min-h-screen flex-col overflow-hidden bg-gradient-to-b from-[#f0f0f0] to-[#c8c8c8] font-['Noto_Sans','Open_Sans',sans-serif] text-[11px] text-black">
      <Toolbar />
      <main className="grid flex-1 grid-cols-[657fr_1219fr] gap-[14px] pt-[14px] pr-4 pl-[14px]">
        <div className="flex flex-col gap-[14px]">
          <ModelTree />
          <Classification />
          <Filtering />
        </div>
        <div className="flex flex-col">
          <Viewport />
          <Takeoff />
        </div>
      </main>
      <footer className="flex h-[33px] items-center border-b-2 border-[#26242a] pl-[21px]">
        <span className="flex-1">Welcome to Solibri Office</span>
        <span className="w-[188px]">Role: Geometric Validation</span>
        <span className="w-[232px]">Selected: 0</span>
      </footer>

      {/* soft shadow under the explorer window */}
      <div className="absolute top-12 left-[725px] h-[423px] w-[840px] rounded-[9px] shadow-[0_16px_48px_6px_rgba(0,0,0,0.65)]" />
      <Explorer />
      <DragGhost />
      <Arrows />
    </div>
  );
}
